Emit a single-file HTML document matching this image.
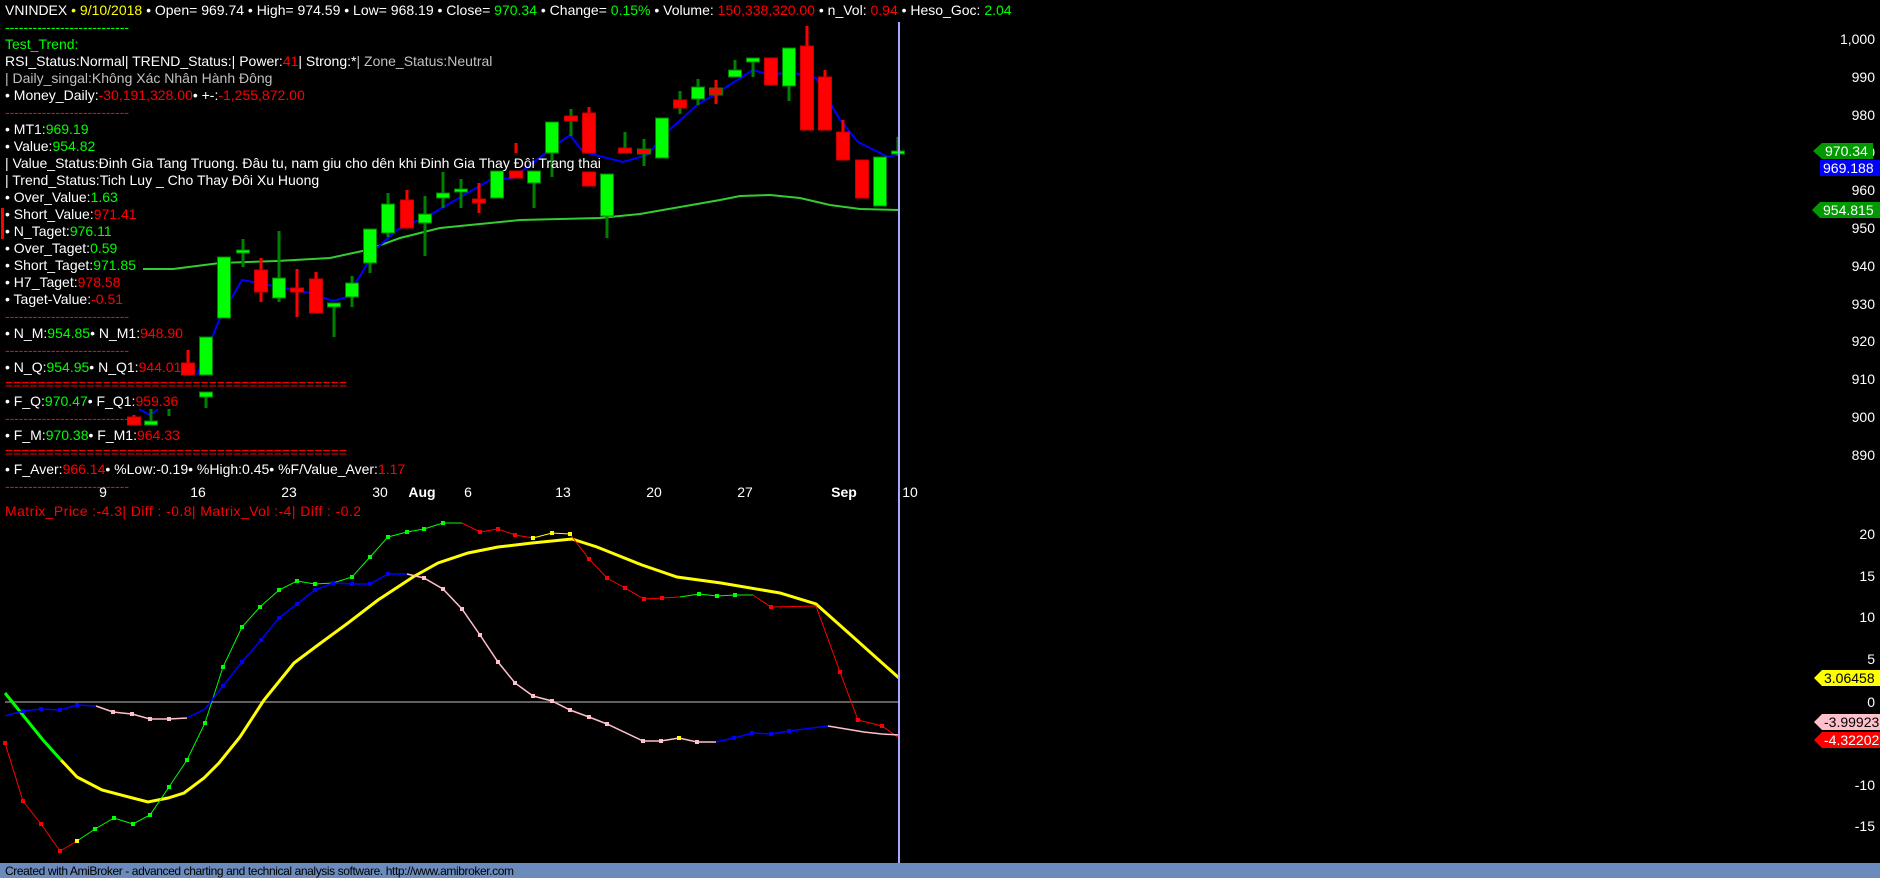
<!DOCTYPE html>
<html><head><meta charset="utf-8"><style>
html,body{margin:0;padding:0;background:#000;width:1880px;height:878px;overflow:hidden}
svg{display:block}
text{font-family:"Liberation Sans","DejaVu Sans",sans-serif;font-size:14px;fill:#fff}
.g{fill:#00ff00}.r{fill:#ff0000}.y{fill:#ffff00}.s{fill:#c0c0c0}
.gw{fill:#008000}.rw{fill:#ff0000}
.gb{fill:#00ff00;stroke:#008000;stroke-width:1}
.rb{fill:#ff0000;stroke:#cc0000;stroke-width:1}
</style></head><body>
<svg width="1880" height="878" viewBox="0 0 1880 878" xmlns="http://www.w3.org/2000/svg">
<rect width="1880" height="878" fill="#000"/>

<!-- upper MA lines -->
<polyline fill="none" stroke="#33cc33" stroke-width="2" points="143,269 173,269 220,263 277,261 330,258 367,250 400,238 440,228 480,224 520,220 560,219 600,218 640,214 680,207 720,200 740,196 770,195 800,198 830,205 860,209 898,210"/>
<polyline fill="none" stroke="#0000ff" stroke-width="2" points="197,375 220,318 242,280 253,282 310,293 333,301 347,297 377,248 397,230 430,215 447,205 490,180 513,178 560,142 570,135 583,152 623,162 647,155 667,132 697,105 717,93 753,70 770,75 790,72 816,78 840,120 858,142 888,157 900,154"/>
<polyline fill="none" stroke="#0000ff" stroke-width="2" points="139,409 150,415 158,409"/>

<!-- candles -->
<g>
<rect class="rw" x="132.5" y="415" width="3" height="10"/><rect class="rb" x="127.5" y="417" width="13" height="8"/>
<rect class="gw" x="149.5" y="409" width="3" height="16"/><rect class="gb" x="144.5" y="421" width="13" height="4"/>
<rect class="gw" x="167.5" y="409" width="3" height="7"/>
<rect class="rw" x="186.5" y="350" width="3" height="25"/><rect class="rb" x="181.5" y="363" width="13" height="12"/>
<rect class="gw" x="204.5" y="337" width="3" height="38"/><rect class="gb" x="199.5" y="337" width="13" height="38"/>
<rect class="gw" x="204.5" y="392" width="3" height="16"/><rect class="gb" x="199.5" y="392" width="13" height="5"/>
<rect class="gw" x="222.5" y="257" width="3" height="61"/><rect class="gb" x="217.5" y="257" width="13" height="61"/>
<rect class="gw" x="241.5" y="239" width="3" height="28"/><rect class="gb" x="236.5" y="250" width="13" height="3"/>
<rect class="rw" x="259.5" y="258" width="3" height="44"/><rect class="rb" x="254.5" y="270" width="13" height="22"/>
<rect class="gw" x="277.5" y="231" width="3" height="71"/><rect class="gb" x="272.5" y="278" width="13" height="20"/>
<rect class="rw" x="295.5" y="269" width="3" height="48"/><rect class="rb" x="290.5" y="288" width="13" height="4"/>
<rect class="rw" x="314.5" y="272" width="3" height="41"/><rect class="rb" x="309.5" y="279" width="13" height="34"/>
<rect class="gw" x="332.5" y="303" width="3" height="34"/><rect class="gb" x="327.5" y="303" width="13" height="4"/>
<rect class="gw" x="350.5" y="276" width="3" height="31"/><rect class="gb" x="345.5" y="283" width="13" height="14"/>
<rect class="gw" x="368.5" y="229" width="3" height="44"/><rect class="gb" x="363.5" y="229" width="13" height="34"/>
<rect class="gw" x="386.5" y="193" width="3" height="44"/><rect class="gb" x="381.5" y="204" width="13" height="29"/>
<rect class="rw" x="405.5" y="190" width="3" height="38"/><rect class="rb" x="400.5" y="200" width="13" height="28"/>
<rect class="gw" x="423.5" y="196" width="3" height="60"/><rect class="gb" x="418.5" y="214" width="13" height="9"/>
<rect class="gw" x="441.5" y="172" width="3" height="36"/><rect class="gb" x="436.5" y="193" width="13" height="5"/>
<rect class="gw" x="459.5" y="179" width="3" height="29"/><rect class="gb" x="454.5" y="189" width="13" height="3"/>
<rect class="rw" x="477.5" y="183" width="3" height="30"/><rect class="rb" x="472.5" y="199" width="13" height="4"/>
<rect class="gw" x="495.5" y="171" width="3" height="27"/><rect class="gb" x="490.5" y="171" width="13" height="27"/>
<rect class="rw" x="514.5" y="143" width="3" height="10"/><rect class="rb" x="509.5" y="171" width="13" height="7"/>
<rect class="gw" x="532.5" y="171" width="3" height="37"/><rect class="gb" x="527.5" y="171" width="13" height="12"/>
<rect class="gw" x="550.5" y="122" width="3" height="55"/><rect class="gb" x="545.5" y="122" width="13" height="31"/>
<rect class="gw" x="569.5" y="109" width="3" height="27"/><rect class="rb" x="564.5" y="116" width="13" height="5"/>
<rect class="rw" x="587.5" y="107" width="3" height="46"/><rect class="rb" x="582.5" y="113" width="13" height="40"/>
<rect class="rb" x="582.5" y="172" width="13" height="14"/>
<rect class="gw" x="605.5" y="174" width="3" height="64"/><rect class="gb" x="600.5" y="174" width="13" height="42"/>
<rect class="gw" x="623.5" y="132" width="3" height="21"/><rect class="rb" x="618.5" y="148" width="13" height="5"/>
<rect class="gw" x="642.5" y="139" width="3" height="27"/><rect class="rb" x="637.5" y="149" width="13" height="5" style="stroke:#008000"/>
<rect class="gw" x="660.5" y="118" width="3" height="40"/><rect class="gb" x="655.5" y="118" width="13" height="40"/>
<rect class="gw" x="678.5" y="91" width="3" height="23"/><rect class="rb" x="673.5" y="100" width="13" height="8"/>
<rect class="gw" x="696.5" y="79" width="3" height="26"/><rect class="gb" x="691.5" y="87" width="13" height="12"/>
<rect class="rw" x="714.5" y="80" width="3" height="24"/><rect class="rb" x="709.5" y="88" width="13" height="7" style="stroke:#008000"/>
<rect class="gw" x="733.5" y="60" width="3" height="17"/><rect class="gb" x="728.5" y="70" width="13" height="7"/>
<rect class="gw" x="751.5" y="58" width="3" height="19"/><rect class="gb" x="746.5" y="58" width="13" height="4"/>
<rect class="rw" x="769.5" y="58" width="3" height="27"/><rect class="rb" x="764.5" y="58" width="13" height="27"/>
<rect class="gw" x="787.5" y="48" width="3" height="53"/><rect class="gb" x="782.5" y="48" width="13" height="38"/>
<rect class="rw" x="805.5" y="26" width="3" height="104"/><rect class="rb" x="800.5" y="46" width="13" height="84"/>
<rect class="rw" x="823.5" y="70" width="3" height="60"/><rect class="rb" x="818.5" y="77" width="13" height="53"/>
<rect class="rw" x="841.5" y="120" width="3" height="40"/><rect class="rb" x="836.5" y="132" width="13" height="28"/>
<rect class="rw" x="860.5" y="160" width="3" height="38"/><rect class="rb" x="855.5" y="160" width="13" height="38"/>
<rect class="gw" x="878.5" y="157" width="3" height="49"/><rect class="gb" x="873.5" y="157" width="13" height="49"/>
<rect class="gw" x="896.5" y="137" width="3" height="19"/><rect class="gb" x="891.5" y="151" width="13" height="3"/>
</g>

<!-- lower panel -->
<line x1="5" y1="702" x2="898" y2="702" stroke="#808080" stroke-width="1.5"/>
<polyline fill="none" stroke="#ffff00" stroke-width="3" points="61,760 77,777 102,790 148,802 168,798 184,793 204,778 219,763 240,737 264,700 294,663 318,645 348,623 378,600 413,577 438,563 468,553 498,547 532,543 572,539 597,547 642,565 677,577 721,583 780,593 816,604 852,636 899,678"/>
<polyline fill="none" stroke="#00ff00" stroke-width="3" points="5,693 43,740 61,760"/>
<g stroke-width="1" fill="none">
<polyline stroke="#ff0000" points="5,743 23,801 41,824 60,851 77,841"/>
<polyline stroke="#00ff00" points="77,841 95,829 114,818 133,824 150,815 169,787 187,760 205,723 223,667 242,627 260,607 279,590 297,581 315,584 333,583 352,577 370,557 388,537 407,532 424,529 443,523 462,523"/>
<polyline stroke="#ff0000" points="462,523 480,532 498,529 515,535 533,538"/>
<polyline stroke="#ffff00" points="533,538 552,533 570,534"/>
<polyline stroke="#ff0000" points="570,534 589,559 607,578 625,588 644,599 662,598 680,597"/>
<polyline stroke="#00ff00" points="680,597 699,594 717,596 735,595 753,595"/>
<polyline stroke="#ff0000" points="753,595 771,607 816,606 840,672 858,720 882,726 899,738"/>
</g>
<g stroke-width="1.5" fill="none">
<polyline stroke="#0000ff" points="5,716 23,711 41,709 60,710 77,705 96,706"/>
<polyline stroke="#ffc0cb" points="96,706 113,712 132,714 150,719 169,719 187,718"/>
<polyline stroke="#0000ff" points="187,718 205,709 223,686 242,662 261,640 279,618 297,604 315,590 333,583 352,584 370,584 388,574 407,574"/>
<polyline stroke="#ffc0cb" points="407,574 424,578 443,589 462,609 480,635 498,662 515,683 533,696 552,701 570,710 589,717 607,724 643,741 661,741 679,738 697,742 716,742"/>
<polyline stroke="#0000ff" points="716,742 734,738 752,733 771,734 789,731 828,726"/>
<polyline stroke="#ffc0cb" points="828,726 864,732 882,734 899,735"/>
</g>
<!-- dots -->
<g fill="#ff0000">
<rect x="3" y="741" width="4" height="4"/><rect x="21" y="799" width="4" height="4"/><rect x="39" y="822" width="4" height="4"/><rect x="58" y="849" width="4" height="4"/>
<rect x="478" y="530" width="4" height="4"/><rect x="496" y="527" width="4" height="4"/><rect x="513" y="533" width="4" height="4"/>
<rect x="587" y="557" width="4" height="4"/><rect x="605" y="576" width="4" height="4"/><rect x="623" y="586" width="4" height="4"/><rect x="642" y="597" width="4" height="4"/><rect x="660" y="596" width="4" height="4"/>
<rect x="769" y="605" width="4" height="4"/><rect x="838" y="670" width="4" height="4"/><rect x="856" y="718" width="4" height="4"/><rect x="880" y="724" width="4" height="4"/>
</g>
<g fill="#00ff00">
<rect x="93" y="827" width="4" height="4"/><rect x="112" y="816" width="4" height="4"/><rect x="131" y="822" width="4" height="4"/><rect x="148" y="813" width="4" height="4"/><rect x="167" y="785" width="4" height="4"/><rect x="185" y="758" width="4" height="4"/><rect x="203" y="721" width="4" height="4"/><rect x="221" y="665" width="4" height="4"/><rect x="240" y="625" width="4" height="4"/><rect x="258" y="605" width="4" height="4"/><rect x="277" y="588" width="4" height="4"/><rect x="295" y="579" width="4" height="4"/><rect x="313" y="582" width="4" height="4"/><rect x="331" y="581" width="4" height="4"/><rect x="350" y="575" width="4" height="4"/><rect x="368" y="555" width="4" height="4"/><rect x="386" y="535" width="4" height="4"/><rect x="405" y="530" width="4" height="4"/><rect x="422" y="527" width="4" height="4"/><rect x="441" y="521" width="4" height="4"/>
<rect x="697" y="592" width="4" height="4"/><rect x="715" y="594" width="4" height="4"/><rect x="733" y="593" width="4" height="4"/>
</g>
<g fill="#ffc0cb">
<rect x="111" y="710" width="4" height="4"/><rect x="130" y="712" width="4" height="4"/><rect x="148" y="717" width="4" height="4"/><rect x="167" y="717" width="4" height="4"/>
<rect x="422" y="576" width="4" height="4"/><rect x="441" y="587" width="4" height="4"/><rect x="460" y="607" width="4" height="4"/><rect x="478" y="633" width="4" height="4"/><rect x="496" y="660" width="4" height="4"/><rect x="513" y="681" width="4" height="4"/><rect x="531" y="694" width="4" height="4"/><rect x="550" y="699" width="4" height="4"/><rect x="568" y="708" width="4" height="4"/><rect x="587" y="715" width="4" height="4"/><rect x="605" y="722" width="4" height="4"/><rect x="641" y="739" width="4" height="4"/><rect x="659" y="739" width="4" height="4"/><rect x="695" y="740" width="4" height="4"/>
</g>
<g fill="#0000ff">
<rect x="21" y="709" width="4" height="4"/><rect x="39" y="707" width="4" height="4"/><rect x="58" y="708" width="4" height="4"/><rect x="75" y="703" width="4" height="4"/>
<rect x="221" y="684" width="4" height="4"/><rect x="240" y="660" width="4" height="4"/><rect x="259" y="638" width="4" height="4"/><rect x="277" y="616" width="4" height="4"/><rect x="295" y="602" width="4" height="4"/><rect x="313" y="588" width="4" height="4"/><rect x="331" y="581" width="4" height="4"/><rect x="350" y="582" width="4" height="4"/><rect x="368" y="582" width="4" height="4"/><rect x="386" y="572" width="4" height="4"/>
<rect x="732" y="736" width="4" height="4"/><rect x="750" y="731" width="4" height="4"/><rect x="769" y="732" width="4" height="4"/><rect x="787" y="729" width="4" height="4"/>
</g>
<g fill="#ffff00"><rect x="531" y="536" width="4" height="4"/><rect x="550" y="531" width="4" height="4"/><rect x="568" y="532" width="4" height="4"/><rect x="677" y="736" width="4" height="4"/><rect x="75" y="839" width="4" height="4"/></g>

<!-- vertical cursor -->
<rect x="898" y="22" width="2" height="841" fill="#a8a8ff"/>

<!-- text block -->
<text x="5" y="15">VNINDEX <tspan class="y">• 9/10/2018</tspan> • Open= 969.74 • High= 974.59 • Low= 968.19 • Close= <tspan class="g">970.34</tspan> • Change= <tspan class="g">0.15%</tspan> • Volume: <tspan class="r">150,338,320.00</tspan> • n_Vol: <tspan class="r">0.94</tspan> • Heso_Goc: <tspan class="g">2.04</tspan></text>
<text x="5" y="32" class="g" textLength="124">---------------------------</text>
<text x="5" y="49" class="g">Test_Trend:</text>
<text x="5" y="66">RSI_Status:Normal| TREND_Status:| Power:<tspan class="r">41</tspan>| Strong:*<tspan class="s">| Zone_Status:Neutral</tspan></text>
<text x="5" y="83" class="s">| Daily_singal:Không Xác Nhân Hành Đông</text>
<text x="5" y="100">• Money_Daily:<tspan class="r">-30,191,328.00</tspan>• +-:<tspan class="r">-1,255,872.00</tspan></text>
<text x="5" y="117" class="r" textLength="124">---------------------------</text>
<text x="5" y="134">• MT1:<tspan class="g">969.19</tspan></text>
<text x="5" y="151">• Value:<tspan class="g">954.82</tspan></text>
<text x="5" y="168">| Value_Status:Đinh Gia Tang Truong. Đâu tu, nam giu cho dên khi Đinh Gia Thay Đôi Trang thai</text>
<text x="5" y="185">| Trend_Status:Tich Luy _ Cho Thay Đôi Xu Huong</text>
<text x="5" y="202">• Over_Value:<tspan class="g">1.63</tspan></text>
<text x="5" y="219">• Short_Value:<tspan class="r">971.41</tspan></text>
<text x="5" y="236">• N_Taget:<tspan class="g">976.11</tspan></text>
<text x="5" y="253">• Over_Taget:<tspan class="g">0.59</tspan></text>
<text x="5" y="270">• Short_Taget:<tspan class="g">971.85</tspan></text>
<text x="5" y="287">• H7_Taget:<tspan class="r">978.58</tspan></text>
<text x="5" y="304">• Taget-Value:<tspan class="r">-0.51</tspan></text>
<text x="5" y="321" class="r" textLength="124">---------------------------</text>
<text x="5" y="338">• N_M:<tspan class="g">954.85</tspan>• N_M1:<tspan class="r">948.90</tspan></text>
<text x="5" y="355" class="r" textLength="124">---------------------------</text>
<text x="5" y="372">• N_Q:<tspan class="g">954.95</tspan>• N_Q1:<tspan class="r">944.01</tspan></text>
<text x="5" y="389" class="r" textLength="342">==========================================</text>
<text x="5" y="406">• F_Q:<tspan class="g">970.47</tspan>• F_Q1:<tspan class="r">959.36</tspan></text>
<text x="5" y="423" class="r" textLength="124">---------------------------</text>
<text x="5" y="440">• F_M:<tspan class="g">970.38</tspan>• F_M1:<tspan class="r">964.33</tspan></text>
<text x="5" y="457" class="r" textLength="342">==========================================</text>
<text x="5" y="474">• F_Aver:<tspan class="r">966.14</tspan>• %Low:-0.19• %High:0.45• %F/Value_Aver:<tspan class="r">1.17</tspan></text>
<text x="5" y="491" class="r" textLength="124">---------------------------</text>
<rect x="1" y="208" width="3" height="31" fill="#ff0000"/>

<!-- date labels -->
<g text-anchor="middle">
<text x="103" y="497">9</text><text x="198" y="497">16</text><text x="289" y="497">23</text><text x="380" y="497">30</text>
<text x="422" y="497" font-weight="bold">Aug</text><text x="468" y="497">6</text><text x="563" y="497">13</text><text x="654" y="497">20</text>
<text x="745" y="497">27</text><text x="844" y="497" font-weight="bold">Sep</text><text x="910" y="497">10</text>
</g>
<text x="5" y="516" class="r" textLength="356">Matrix_Price :-4.3|   Diff : -0.8| Matrix_Vol :-4|   Diff : -0.2</text>

<!-- right axis -->
<g text-anchor="end">
<text x="1875" y="44">1,000</text><text x="1875" y="82">990</text><text x="1875" y="120">980</text><text x="1875" y="157">970</text>
<text x="1875" y="195">960</text><text x="1875" y="233">950</text><text x="1875" y="271">940</text><text x="1875" y="309">930</text>
<text x="1875" y="346">920</text><text x="1875" y="384">910</text><text x="1875" y="422">900</text><text x="1875" y="460">890</text>
<text x="1875" y="539">20</text><text x="1875" y="581">15</text><text x="1875" y="622">10</text><text x="1875" y="664">5</text>
<text x="1875" y="707">0</text><text x="1875" y="748">-5</text><text x="1875" y="790">-10</text><text x="1875" y="831">-15</text>
</g>
<!-- tags -->
<polygon points="1813,151 1822,143 1873,143 1873,159 1822,159" fill="#009900"/>
<text x="1825" y="156">970.34</text>
<rect x="1820" y="160" width="60" height="16" fill="#0000ff"/>
<text x="1823" y="173">969.188</text>
<polygon points="1812,210 1820,202 1880,202 1880,218 1820,218" fill="#009900"/>
<text x="1823" y="215">954.815</text>
<polygon points="1814,678 1822,670 1880,670 1880,686 1822,686" fill="#ffff00"/>
<text x="1824" y="683" style="fill:#000">3.06458</text>
<polygon points="1814,722 1822,714 1880,714 1880,730 1822,730" fill="#ffc0cb"/>
<text x="1824" y="727" style="fill:#000">-3.99923</text>
<polygon points="1814,740 1822,732 1880,732 1880,748 1822,748" fill="#ff0000"/>
<text x="1824" y="745">-4.32202</text>

<!-- footer -->
<rect x="0" y="863" width="1880" height="15" fill="#6a8bbb"/>
<text x="5" y="875" style="fill:#000;font-size:12px" textLength="509">Created with AmiBroker - advanced charting and technical analysis software. http://www.amibroker.com</text>
</svg>
</body></html>
